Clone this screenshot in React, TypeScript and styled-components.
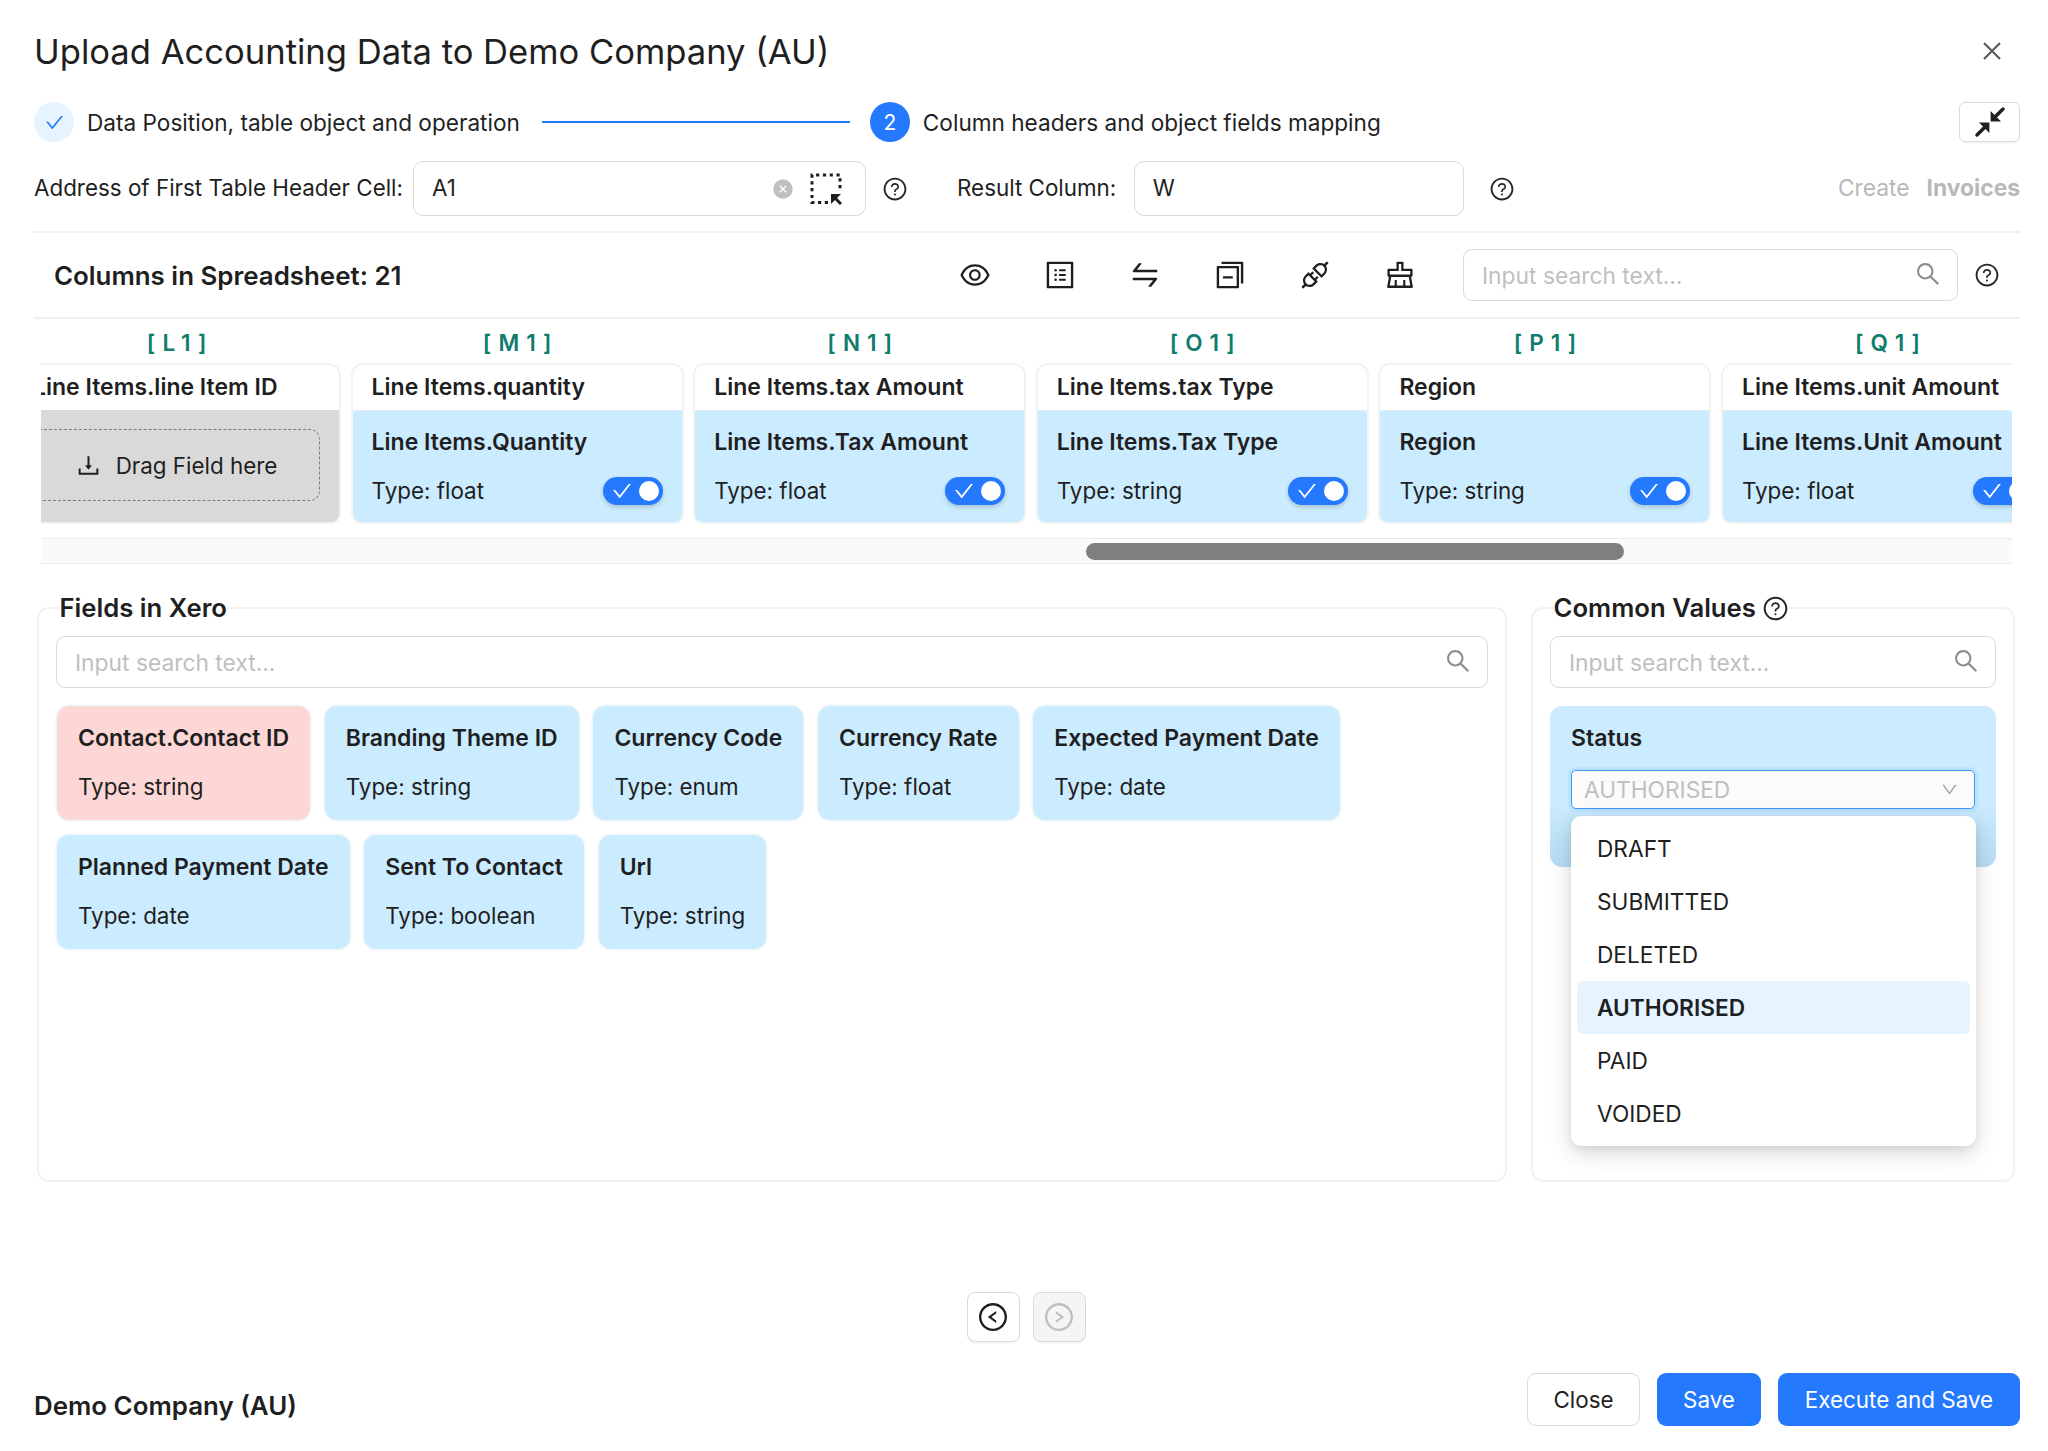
import React from 'react'
import styled, { createGlobalStyle } from 'styled-components'
import {
    AiOutlineApi,
    AiOutlineCheck,
    AiOutlineClear,
    AiOutlineClose,
    AiFillCloseCircle,
    AiOutlineDown,
    AiOutlineDownload,
    AiOutlineEye,
    AiOutlineLeftCircle,
    AiOutlineProfile,
    AiOutlineQuestionCircle,
    AiOutlineRightCircle,
    AiOutlineSearch,
    AiOutlineSwap,
    AiOutlineSwitcher,
} from 'react-icons/ai'

const GlobalStyle = createGlobalStyle`
    html, body {
        margin: 0;
        padding: 0;
        background: #ffffff;
    }
    body {
        font-family: Inter, "Liberation Sans", sans-serif;
        font-size: 22.4px;
        color: #1f1f1f;
    }
    * {
        box-sizing: border-box;
    }
`

const Page = styled.div`
    width: 2048px;
    height: 1451px;
    padding: 0 28px 0 34px;
    display: flex;
    flex-direction: column;
    overflow: hidden;
`

const TitleRow = styled.div`
    height: 102px;
    display: flex;
    align-items: center;
    justify-content: space-between;
`

const Title = styled.h1`
    margin: 0;
    font-size: 34.6px;
    font-weight: 400;
`

const CloseIcon = styled(AiOutlineClose)`
    font-size: 26px;
    color: #595959;
    margin-right: 15px;
`

const StepsRow = styled.div`
    height: 40px;
    display: flex;
    align-items: center;
`

const StepCircle = styled.span<{ $done?: boolean }>`
    width: 40px;
    height: 40px;
    border-radius: 50%;
    display: flex;
    align-items: center;
    justify-content: center;
    flex: none;
    font-size: 21px;
    background: ${p => (p.$done ? '#e6f4ff' : '#2479ff')};
    color: ${p => (p.$done ? '#2479ff' : '#ffffff')};
`

const StepText = styled.span`
    margin-left: 13px;
    font-size: 22.6px;
    white-space: nowrap;
`

const StepLine = styled.span`
    width: 308px;
    height: 2px;
    margin: 0 20px 0 22px;
    background: #2479ff;
    flex: none;
`

const ShrinkButton = styled.button`
    margin-left: auto;
    width: 61px;
    height: 40px;
    padding: 0;
    display: flex;
    align-items: center;
    justify-content: center;
    background: #ffffff;
    border: 1.5px solid #d9d9d9;
    border-radius: 6px;
    box-shadow: 0 2px 0 rgba(0, 0, 0, 0.03);
    color: #1f1f1f;
`

const AddressRow = styled.div`
    margin-top: 19px;
    height: 55px;
    display: flex;
    align-items: center;
`

const Label = styled.span<{ $left?: number }>`
    margin-left: ${p => p.$left ?? 0}px;
    padding-bottom: 2px;
    white-space: nowrap;
`

const TextBox = styled.div<{ $width: number; $left: number }>`
    width: ${p => p.$width}px;
    height: 55px;
    margin-left: ${p => p.$left}px;
    padding: 0 23px 0 18px;
    display: flex;
    align-items: center;
    border: 1.5px solid #d9d9d9;
    border-radius: 10px;
    background: #ffffff;
`

const TextBoxValue = styled.span`
    flex: 1;
    padding-bottom: 2px;
`

const ClearIcon = styled(AiFillCloseCircle)`
    font-size: 22px;
    color: #bfbfbf;
    margin-right: 16px;
`

const HelpIcon = styled(AiOutlineQuestionCircle)<{ $left?: number; $size?: number }>`
    font-size: ${p => p.$size ?? 26}px;
    margin-left: ${p => p.$left ?? 0}px;
    color: #262626;
    flex: none;
`

const ObjectName = styled.span`
    margin-left: auto;
    padding-bottom: 2px;
    color: #b8b8b8;
    font-size: 22.8px;
    white-space: nowrap;
    display: flex;
    gap: 17px;
`

const ObjectBold = styled.b`
    font-weight: 700;
`

const Toolbar = styled.div`
    margin-top: 15px;
    height: 88px;
    padding: 0 20px;
    display: flex;
    align-items: center;
    border-top: 2px solid #f0f0f0;
    border-bottom: 2px solid #f0f0f0;
`

const ToolbarTitle = styled.span`
    font-size: 25.9px;
    font-weight: 600;
    white-space: nowrap;
`

const ToolIcons = styled.div`
    margin-left: auto;
    width: 505px;
    display: flex;
    align-items: center;
    gap: 51px;
    font-size: 34px;
    color: #1f1f1f;
`

const SearchBox = styled.label<{ $width?: number }>`
    ${p => (p.$width ? `width: ${p.$width}px;` : 'width: 100%;')}
    height: 52px;
    padding: 0 15px 0 18px;
    display: flex;
    align-items: center;
    border: 1.5px solid #d9d9d9;
    border-radius: 9px;
    background: #ffffff;
    flex: none;
`

const SearchInput = styled.input`
    flex: 1;
    min-width: 0;
    border: 0;
    outline: 0;
    padding: 0;
    background: transparent;
    font: inherit;
    font-size: 22.8px;
    color: #1f1f1f;
    &::placeholder {
        color: #bfbfbf;
        opacity: 1;
    }
`

const SearchIcon = styled(AiOutlineSearch)`
    font-size: 28px;
    color: #8c8c8c;
    transform: translateY(-1px);
`

const ColumnsViewport = styled.div`
    margin: 0 8px 0 7px;
    overflow: hidden;
`

const ColumnsRow = styled.div`
    margin-left: -29px;
    display: flex;
    gap: 9.6px;
    width: max-content;
`

const Column = styled.div<{ $clipped?: boolean }>`
    width: ${p => (p.$clipped ? 329 : 333)}px;
    flex: none;
`

const ColumnLabel = styled.div`
    height: 44px;
    padding: 2px 0 0 7px;
    display: flex;
    align-items: center;
    justify-content: center;
    color: #0e7c6e;
    font-weight: 600;
    font-size: 22.5px;
    letter-spacing: 7px;
    white-space: pre;
`

const ColumnCard = styled.div`
    height: 161px;
    display: flex;
    flex-direction: column;
    border: 2px solid #f2f2f2;
    border-radius: 12px 12px 10px 10px;
    overflow: hidden;
`

const ColumnHead = styled.div`
    height: 45px;
    flex: none;
    padding: 0 19px 2px;
    display: flex;
    align-items: center;
    font-size: 23px;
    font-weight: 600;
    white-space: nowrap;
    background: #ffffff;
`

const MappedBody = styled.div`
    flex: 1;
    padding: 15px 18px 0 19px;
    background: #cbebff;
    border-top: 1px solid #e4eef4;
`

const CardTitle = styled.div`
    font-size: 23px;
    font-weight: 600;
    white-space: nowrap;
    line-height: 32px;
`

const TypeRow = styled.div`
    margin-top: 17px;
    line-height: 32px;
    display: flex;
    align-items: center;
    justify-content: space-between;
    white-space: nowrap;
`

const Toggle = styled.span`
    width: 60px;
    height: 28px;
    padding: 0 4px 0 8px;
    margin-right: 1px;
    flex: none;
    display: flex;
    align-items: center;
    justify-content: space-between;
    border-radius: 14px;
    background: #2479ff;
    color: #ffffff;
    font-size: 22px;
    box-shadow: 0 2px 4px rgba(0, 35, 11, 0.2);
`

const ToggleKnob = styled.span`
    width: 20px;
    height: 20px;
    border-radius: 50%;
    background: #ffffff;
`

const EmptyBody = styled.div`
    flex: 1;
    padding: 19px 19px 21px 0;
    background: #d9d9d9;
`

const DropZone = styled.div`
    height: 72px;
    padding-left: 18px;
    display: flex;
    align-items: center;
    justify-content: center;
    gap: 14px;
    border: 1.5px dashed #7a7a7a;
    border-radius: 10px;
`

const DropIcon = styled(AiOutlineDownload)`
    font-size: 27px;
`

const ScrollTrack = styled.div`
    margin: 14px 8px 0 7px;
    height: 26px;
    padding-top: 4px;
    background: #fafafa;
    border-top: 1.5px solid #ececec;
    border-bottom: 1.5px solid #ececec;
`

const ScrollThumb = styled.div<{ $left: number; $width: number }>`
    width: ${p => p.$width}px;
    height: 17px;
    margin-left: ${p => p.$left}px;
    border-radius: 9px;
    background: #7f7f7f;
`

const Panels = styled.div`
    margin: 27px 5px 0 3px;
    height: 591px;
    display: grid;
    grid-template-columns: 1470px 484px;
    gap: 24px;
`

const Panel = styled.fieldset`
    margin: 0;
    min-width: 0;
    padding: 11px 17px 0;
    border: 2px solid #f2f2f2;
    border-radius: 12px;
    position: relative;
`

const PanelTitle = styled.legend`
    margin-left: 3.5px;
    padding: 0;
    height: 34px;
    font-size: 25.7px;
    line-height: 34px;
    font-weight: 600;
    display: flex;
    align-items: center;
    gap: 6px;
`

const FieldsWrap = styled.div`
    margin: 18px 0 0 1px;
    display: flex;
    flex-wrap: wrap;
    gap: 15px 14.7px;
`

const FieldCard = styled.div<{ $required?: boolean }>`
    height: 114px;
    padding: 16px 21px 0;
    border-radius: 12px;
    background: ${p => (p.$required ? '#fdd6d6' : '#cbebff')};
    box-shadow: 0 0 0 1.5px #f0f6fa;
`

const StatusCard = styled.div`
    margin-top: 18px;
    height: 161px;
    padding: 16px 21px 0;
    border-radius: 12px;
    background: #cbebff;
    background-image: linear-gradient(to bottom, #cbebff 60%, #b6dcf2 100%);
    position: relative;
`

const SelectBox = styled.div`
    margin-top: 16px;
    height: 39px;
    padding: 0 15px 0 12px;
    display: flex;
    align-items: center;
    justify-content: space-between;
    border: 1.5px solid #4096ff;
    border-radius: 5px;
    background: #fbfbfb;
    color: #bfbfbf;
    font-size: 22.7px;
    box-shadow: 0 0 0 3px rgba(5, 145, 255, 0.08);
`

const SelectArrow = styled(AiOutlineDown)`
    font-size: 19px;
    color: #a6a6a6;
`

const Dropdown = styled.ul`
    position: absolute;
    top: 110px;
    left: 21px;
    width: 405px;
    margin: 0;
    padding: 6.5px 6px;
    list-style: none;
    border-radius: 10px;
    background: #ffffff;
    font-size: 22.7px;
    box-shadow: 0 8px 24px rgba(0, 0, 0, 0.14), 0 3px 8px rgba(0, 0, 0, 0.08);
`

const DropdownItem = styled.li<{ $active?: boolean }>`
    height: 52.9px;
    padding: 0 20px;
    display: flex;
    align-items: center;
    border-radius: 6px;
    font-weight: ${p => (p.$active ? 600 : 400)};
    background: ${p => (p.$active ? '#e6f4ff' : 'transparent')};
`

const Pager = styled.div`
    margin-top: 110px;
    padding-right: 2px;
    display: flex;
    justify-content: center;
    gap: 13px;
`

const PageButton = styled.button<{ $disabled?: boolean }>`
    width: 53px;
    height: 50px;
    padding: 0;
    display: flex;
    align-items: center;
    justify-content: center;
    border: 1.5px solid #d9d9d9;
    border-radius: 8px;
    font-size: 32px;
    background: ${p => (p.$disabled ? '#f5f5f5' : '#ffffff')};
    color: ${p => (p.$disabled ? '#bfbfbf' : '#1f1f1f')};
    box-shadow: 0 2px 0 rgba(0, 0, 0, 0.03);
`

const Footer = styled.div`
    margin-top: 31px;
    display: flex;
    align-items: flex-start;
    justify-content: space-between;
`

const CompanyName = styled.span`
    margin-top: 17px;
    font-size: 25.9px;
    font-weight: 600;
`

const FooterButtons = styled.div`
    display: flex;
    gap: 17px;
`

const ActionButton = styled.button<{ $primary?: boolean; $width: number }>`
    width: ${p => p.$width}px;
    height: 53px;
    padding: 0;
    border-radius: 9px;
    font: inherit;
    border: ${p => (p.$primary ? '0' : '1.5px solid #d9d9d9')};
    background: ${p => (p.$primary ? '#2479ff' : '#ffffff')};
    color: ${p => (p.$primary ? '#ffffff' : '#1f1f1f')};
`

const ShrinkArrows: React.FC = () => (
    <svg width="30" height="30" viewBox="0 0 30 30" fill="currentColor" stroke="none">
        <polygon points="15.6,14.4 15.6,4 26,14.4" />
        <polygon points="14.4,15.6 14.4,26 4,15.6" />
        <path d="M19 11 L28 2 M11 19 L2 28" stroke="currentColor" strokeWidth="3.4" strokeLinecap="round" />
    </svg>
)

const SelectCellIcon: React.FC = () => (
    <svg width="32" height="32" viewBox="0 0 32 32" fill="none">
        <path
            d="M18 29.5 H2 V2 H30 V18"
            stroke="#1f1f1f"
            strokeWidth="3"
            strokeDasharray="3.2 3.6"
        />
        <polygon points="21,21 31,21 21,31" fill="#1f1f1f" />
        <path d="M24 24 L31 31" stroke="#1f1f1f" strokeWidth="3" />
    </svg>
)

const columns = [
    { cell: '[L1]', head: 'Line Items.line Item ID' },
    { cell: '[M1]', head: 'Line Items.quantity', field: 'Line Items.Quantity', type: 'float' },
    { cell: '[N1]', head: 'Line Items.tax Amount', field: 'Line Items.Tax Amount', type: 'float' },
    { cell: '[O1]', head: 'Line Items.tax Type', field: 'Line Items.Tax Type', type: 'string' },
    { cell: '[P1]', head: 'Region', field: 'Region', type: 'string' },
    { cell: '[Q1]', head: 'Line Items.unit Amount', field: 'Line Items.Unit Amount', type: 'float' },
]

const fields = [
    { name: 'Contact.Contact ID', type: 'string', required: true },
    { name: 'Branding Theme ID', type: 'string' },
    { name: 'Currency Code', type: 'enum' },
    { name: 'Currency Rate', type: 'float' },
    { name: 'Expected Payment Date', type: 'date' },
    { name: 'Planned Payment Date', type: 'date' },
    { name: 'Sent To Contact', type: 'boolean' },
    { name: 'Url', type: 'string' },
]

const statuses = ['DRAFT', 'SUBMITTED', 'DELETED', 'AUTHORISED', 'PAID', 'VOIDED']

const App: React.FC = () => {
    return (
        <Page>
            <GlobalStyle />
            <TitleRow>
                <Title>Upload Accounting Data to Demo Company (AU)</Title>
                <CloseIcon />
            </TitleRow>

            <StepsRow>
                <StepCircle $done><AiOutlineCheck /></StepCircle>
                <StepText>Data Position, table object and operation</StepText>
                <StepLine />
                <StepCircle>2</StepCircle>
                <StepText>Column headers and object fields mapping</StepText>
                <ShrinkButton><ShrinkArrows /></ShrinkButton>
            </StepsRow>

            <AddressRow>
                <Label>Address of First Table Header Cell:</Label>
                <TextBox $width={453} $left={10}>
                    <TextBoxValue>A1</TextBoxValue>
                    <ClearIcon />
                    <SelectCellIcon />
                </TextBox>
                <HelpIcon $left={16} />
                <Label $left={49}>Result Column:</Label>
                <TextBox $width={330} $left={17.5}>
                    <TextBoxValue>W</TextBoxValue>
                </TextBox>
                <HelpIcon $left={25} />
                <ObjectName>Create <ObjectBold>Invoices</ObjectBold></ObjectName>
            </AddressRow>

            <Toolbar>
                <ToolbarTitle>Columns in Spreadsheet: 21</ToolbarTitle>
                <ToolIcons>
                    <AiOutlineEye />
                    <AiOutlineProfile />
                    <AiOutlineSwap />
                    <AiOutlineSwitcher />
                    <AiOutlineApi />
                    <AiOutlineClear />
                </ToolIcons>
                <SearchBox $width={495}>
                    <SearchInput placeholder="Input search text..." />
                    <SearchIcon />
                </SearchBox>
                <HelpIcon $left={16} />
            </Toolbar>

            <ColumnsViewport>
                <ColumnsRow>
                    {columns.map(col => (
                        <Column key={col.cell} $clipped={!col.field}>
                            <ColumnLabel>{col.cell}</ColumnLabel>
                            <ColumnCard>
                                <ColumnHead>{col.head}</ColumnHead>
                                {col.field ? (
                                    <MappedBody>
                                        <CardTitle>{col.field}</CardTitle>
                                        <TypeRow>
                                            Type: {col.type}
                                            <Toggle><AiOutlineCheck /><ToggleKnob /></Toggle>
                                        </TypeRow>
                                    </MappedBody>
                                ) : (
                                    <EmptyBody>
                                        <DropZone><DropIcon />Drag Field here</DropZone>
                                    </EmptyBody>
                                )}
                            </ColumnCard>
                        </Column>
                    ))}
                </ColumnsRow>
            </ColumnsViewport>
            <ScrollTrack>
                <ScrollThumb $left={1045} $width={538} />
            </ScrollTrack>

            <Panels>
                <Panel>
                    <PanelTitle>Fields in Xero</PanelTitle>
                    <SearchBox>
                        <SearchInput placeholder="Input search text..." />
                        <SearchIcon />
                    </SearchBox>
                    <FieldsWrap>
                        {fields.map(field => (
                            <FieldCard key={field.name} $required={field.required}>
                                <CardTitle>{field.name}</CardTitle>
                                <TypeRow>Type: {field.type}</TypeRow>
                            </FieldCard>
                        ))}
                    </FieldsWrap>
                </Panel>
                <Panel>
                    <PanelTitle>Common Values <HelpIcon $size={27} /></PanelTitle>
                    <SearchBox>
                        <SearchInput placeholder="Input search text..." />
                        <SearchIcon />
                    </SearchBox>
                    <StatusCard>
                        <CardTitle>Status</CardTitle>
                        <SelectBox>AUTHORISED<SelectArrow /></SelectBox>
                        <Dropdown>
                            {statuses.map(status => (
                                <DropdownItem key={status} $active={status === 'AUTHORISED'}>{status}</DropdownItem>
                            ))}
                        </Dropdown>
                    </StatusCard>
                </Panel>
            </Panels>

            <Pager>
                <PageButton><AiOutlineLeftCircle /></PageButton>
                <PageButton $disabled><AiOutlineRightCircle /></PageButton>
            </Pager>

            <Footer>
                <CompanyName>Demo Company (AU)</CompanyName>
                <FooterButtons>
                    <ActionButton $width={113}>Close</ActionButton>
                    <ActionButton $primary $width={104}>Save</ActionButton>
                    <ActionButton $primary $width={242}>Execute and Save</ActionButton>
                </FooterButtons>
            </Footer>
        </Page>
    )
}

export default App
